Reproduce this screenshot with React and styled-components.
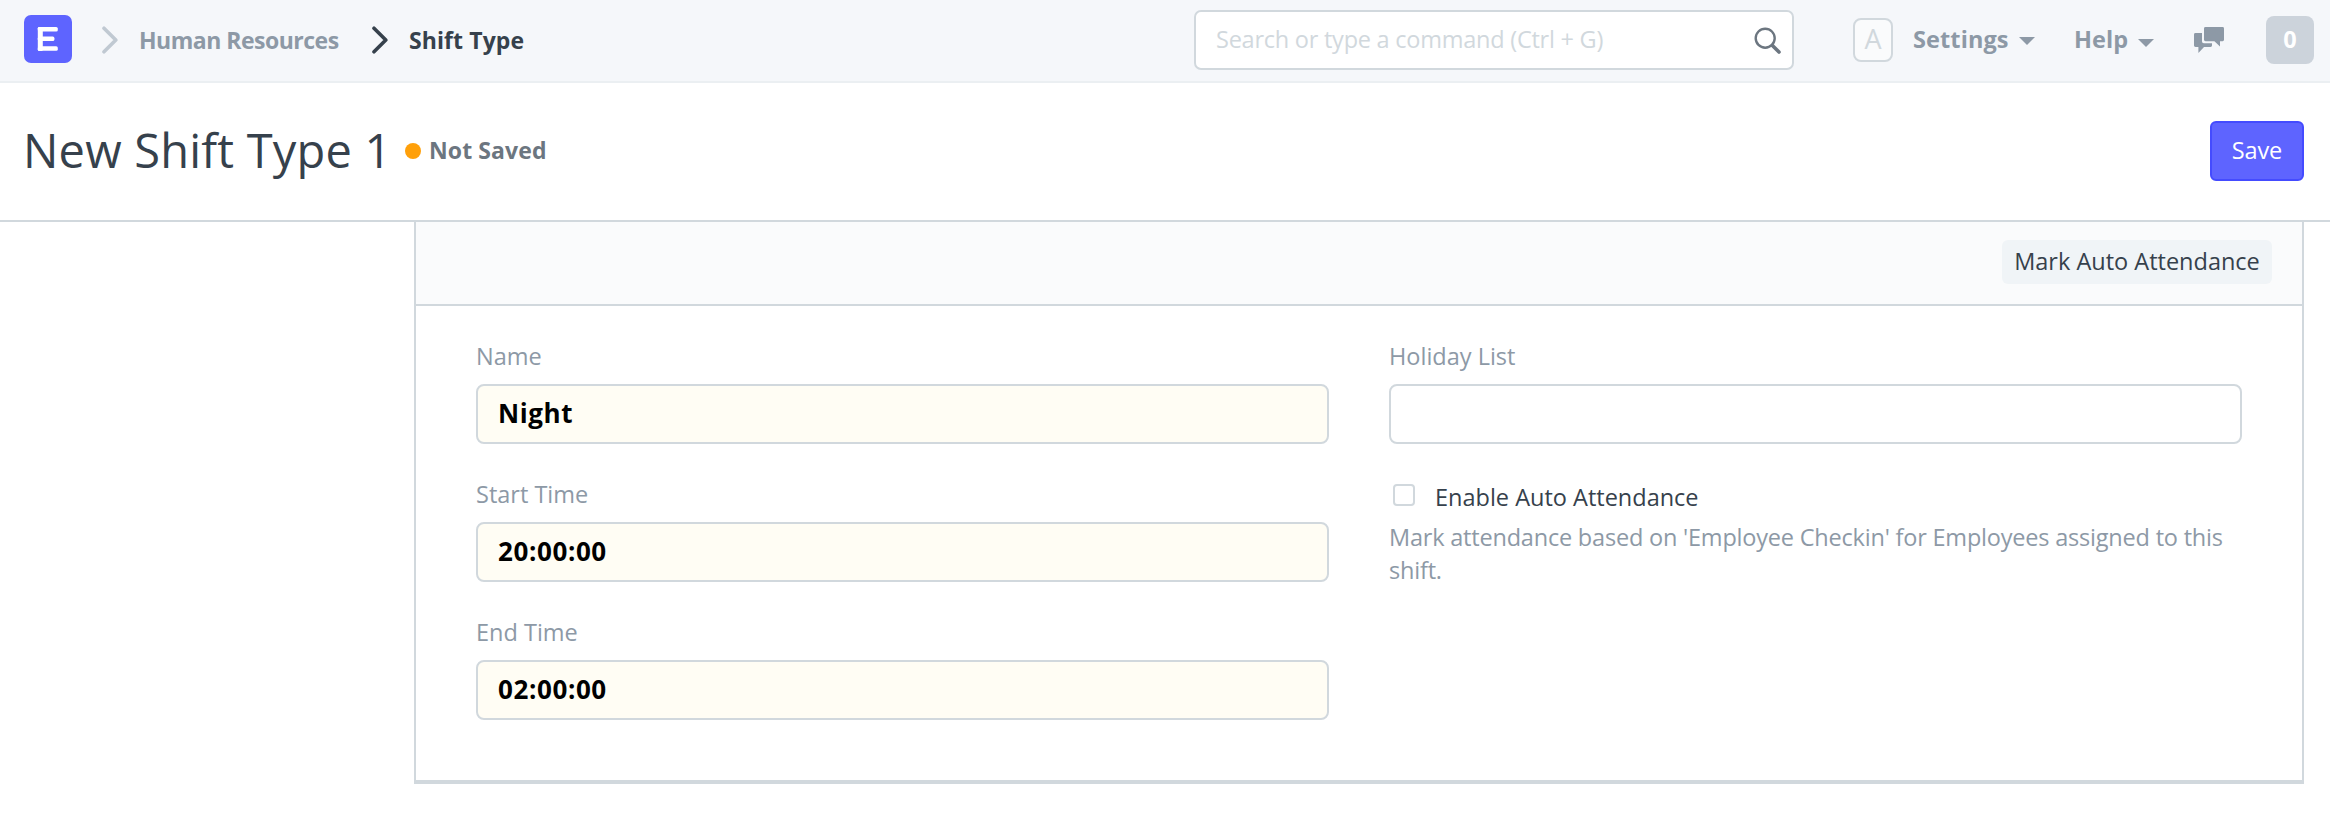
import React from "react";
import styled, { createGlobalStyle } from "styled-components";

const c = {
  primary: "#5e64ff",
  muted: "#8d99a6",
  text: "#36414c",
  line: "#d1d8dd",
};

const GlobalStyle = createGlobalStyle`
  *, *::before, *::after { box-sizing: border-box; }
  body {
    margin: 0;
    background: #fff;
    color: ${c.text};
    font-family: "Open Sans", "Noto Sans", sans-serif;
    font-size: 23.5px;
    line-height: 32px;
  }
  input, button { font: inherit; }
`;

const Page = styled.div`
  height: 818px;
  overflow: hidden;
`;

const Navbar = styled.header`
  display: flex;
  align-items: center;
  height: 83px;
  padding: 0 16px 1px 24px;
  background: #f5f7fa;
  border-bottom: 2px solid #ebeff2;
`;

const Icon = styled.svg`
  display: block;
  flex: none;
`;

const Logo = styled.div`
  width: 48px;
  height: 48px;
  margin: 0 30px 2px 0;
  border-radius: 7px;
  background: ${c.primary};
`;

const Crumb = styled.a`
  width: ${(p) => p.$width}px;
  color: ${(p) => (p.$active ? c.text : c.muted)};
  font-size: 23px;
  font-weight: 700;
  letter-spacing: ${(p) => p.$track}px;
  white-space: nowrap;
  margin: 0 30px 0 21px;
`;

const SearchBox = styled.div`
  display: flex;
  align-items: center;
  width: 600px;
  height: 60px;
  margin-left: auto;
  padding: 0 10px 0 20px;
  background: #fff;
  border: 2px solid ${c.line};
  border-radius: 7px;
`;

const SearchInput = styled.input`
  flex: 1;
  min-width: 0;
  height: 32px;
  margin-bottom: 2px;
  padding: 0;
  border: 0;
  outline: 0;
  background: none;
  letter-spacing: -0.24px;
  &::placeholder { color: ${c.line}; opacity: 1; }
`;

const Avatar = styled.div`
  width: 40px;
  height: 44px;
  margin: 0 20px 0 59px;
  border: 2px solid ${c.line};
  border-radius: 8px;
  background: #fafbfc;
  color: ${c.line};
  font-size: 27px;
  line-height: 38px;
  text-align: center;
`;

const MenuLink = styled.a`
  display: flex;
  align-items: center;
  gap: 10px;
  width: ${(p) => p.$width}px;
  margin-bottom: 2px;
  color: ${c.muted};
  font-weight: 700;
  letter-spacing: ${(p) => p.$track}px;
`;

const Caret = styled.span`
  margin-top: ${(p) => p.$drop}px;
  border: 8px solid transparent;
  border-top-color: ${c.muted};
  border-bottom: 0;
`;

const Count = styled.span`
  width: 48px;
  height: 48px;
  margin-left: 42px;
  border-radius: 8px;
  background: #ccd3db;
  color: #fff;
  font-weight: 700;
  line-height: 46px;
  text-align: center;
`;

const PageHead = styled.div`
  display: flex;
  align-items: center;
  height: 139px;
  padding: 0 26px 1px 23px;
  border-bottom: 2px solid ${c.line};
`;

const Title = styled.h1`
  width: 364px;
  margin: 0 0 2px;
  font-size: 47px;
  font-weight: 400;
  line-height: 64px;
  letter-spacing: 0.2px;
  white-space: nowrap;
`;

const Status = styled.span`
  display: flex;
  align-items: center;
  gap: 8px;
  margin-left: 18px;
  color: #6c7680;
  font-size: 23px;
  font-weight: 700;
  letter-spacing: 0.1px;
`;

const Dot = styled.i`
  width: 16px;
  height: 16px;
  border-radius: 50%;
  background: #ffa00a;
`;

const StatusText = styled.span`
  margin-bottom: 2px;
`;

const SaveButton = styled.button`
  width: 94px;
  height: 60px;
  margin-left: auto;
  padding: 0 0 2px;
  border: 2px solid #444bff;
  border-radius: 6px;
  background: ${c.primary};
  color: #fff;
  letter-spacing: -0.13px;
`;

const Card = styled.main`
  margin: 0 26px 0 414px;
  border: 2px solid ${c.line};
  border-width: 0 2px 4px;
`;

const CardHead = styled.div`
  display: flex;
  justify-content: flex-end;
  height: 84px;
  padding: 18px 30px 0;
  background: #fafbfc;
  border-bottom: 2px solid ${c.line};
`;

const MarkButton = styled.button`
  width: 270px;
  height: 44px;
  padding: 0 0 2px;
  border: 0;
  border-radius: 6px;
  background: #f0f4f7;
  color: ${c.text};
`;

const Form = styled.form`
  display: grid;
  grid-template-columns: 1fr 1fr;
  column-gap: 60px;
  padding: 34px 60px 60px;
`;

const Column = styled.div`
  display: flex;
  flex-direction: column;
  gap: 34px;
`;

const Field = styled.label`
  display: flex;
  flex-direction: column;
  gap: 12px;
  color: ${c.muted};
`;

const TextInput = styled.input`
  width: 100%;
  height: 60px;
  padding: 0 20px 2px;
  border: 2px solid ${c.line};
  border-radius: 8px;
  outline: 0;
  background: ${(p) => (p.$filled ? "#fffdf4" : "#fff")};
  color: #000;
  font-size: 26px;
  font-weight: 700;
  letter-spacing: 0.6px;
`;

const CheckRow = styled.label`
  display: flex;
  align-items: center;
  gap: 20px;
  height: 38px;
  padding-left: 4px;
`;

const Checkbox = styled.input`
  appearance: none;
  width: 22px;
  height: 22px;
  margin: 0 0 4px;
  border: 2px solid ${c.line};
  border-radius: 4px;
  background: #fff;
`;

const Help = styled.p`
  margin: 0;
  padding-top: 5px;
  color: ${c.muted};
  line-height: 33px;
  letter-spacing: -0.2px;
`;

const Chevron = ({ color }) => (
  <Icon width="16" height="28" viewBox="0 0 16 28" fill="none" stroke={color} strokeWidth="3.6" strokeLinecap="round" strokeLinejoin="round">
    <path d="M2 2.2 L13.8 14 L2 25.8" />
  </Icon>
);

const LogoMark = () => (
  <Icon width="48" height="48" viewBox="0 0 48 48" fill="#fff">
    <rect x="13.8" y="12" width="5" height="24" rx="1.2" />
    <rect x="13.8" y="12" width="20" height="4.5" rx="1.6" />
    <rect x="13.8" y="21.6" width="16.6" height="4.4" rx="1.6" />
    <rect x="13.8" y="31.3" width="20" height="4.5" rx="1.6" />
  </Icon>
);

const SearchIcon = () => (
  <Icon width="28" height="28" viewBox="0 0 28 28" fill="none" stroke="#6c7680">
    <circle cx="11.2" cy="12.2" r="9.5" strokeWidth="2.4" />
    <path d="M18.4 19.4 L25 26" strokeWidth="3.6" strokeLinecap="round" />
  </Icon>
);

const ChatIcon = () => (
  <Icon width="30" height="26" viewBox="0 0 30 26" fill="#8d99a6">
    <path d="M11.5 0H28.6Q30 0 30 1.4V12.8Q30 14.2 28.6 14.2H26V19.5L20.4 14.2H11.5Q10 14.2 10 12.8V1.4Q10 0 11.5 0Z" />
    <path d="M1.5 6H8V14.4Q8 16.2 9.8 16.2H18V18.6Q18 20 16.6 20H10L4.4 26V20H1.5Q0 20 0 18.6V7.4Q0 6 1.5 6Z" />
  </Icon>
);

const TextField = ({ label, value, filled }) => (
  <Field>
    {label}
    <TextInput $filled={filled} defaultValue={value} />
  </Field>
);

export default function App() {
  return (
    <Page>
      <GlobalStyle />
      <Navbar>
        <Logo><LogoMark /></Logo>
        <Chevron color="#c0c9d2" />
        <Crumb $width={203} $track={-0.5}>Human Resources</Crumb>
        <Chevron color={c.text} />
        <Crumb $active $width={118} $track={0.1}>Shift Type</Crumb>
        <SearchBox>
          <SearchInput placeholder="Search or type a command (Ctrl + G)" />
          <SearchIcon />
        </SearchBox>
        <Avatar>A</Avatar>
        <MenuLink $width={161} $track={0.1}>Settings<Caret $drop={4} /></MenuLink>
        <MenuLink $width={120} $track={0.1}>Help<Caret $drop={8} /></MenuLink>
        <ChatIcon />
        <Count>0</Count>
      </Navbar>
      <PageHead>
        <Title>New Shift Type 1</Title>
        <Status><Dot /><StatusText>Not Saved</StatusText></Status>
        <SaveButton>Save</SaveButton>
      </PageHead>
      <Card>
        <CardHead><MarkButton>Mark Auto Attendance</MarkButton></CardHead>
        <Form>
          <Column>
            <TextField label="Name" value="Night" filled />
            <TextField label="Start Time" value="20:00:00" filled />
            <TextField label="End Time" value="02:00:00" filled />
          </Column>
          <Column>
            <TextField label="Holiday List" value="" />
            <div>
              <CheckRow><Checkbox type="checkbox" />Enable Auto Attendance</CheckRow>
              <Help>Mark attendance based on 'Employee Checkin' for Employees assigned to this shift.</Help>
            </div>
          </Column>
        </Form>
      </Card>
    </Page>
  );
}
